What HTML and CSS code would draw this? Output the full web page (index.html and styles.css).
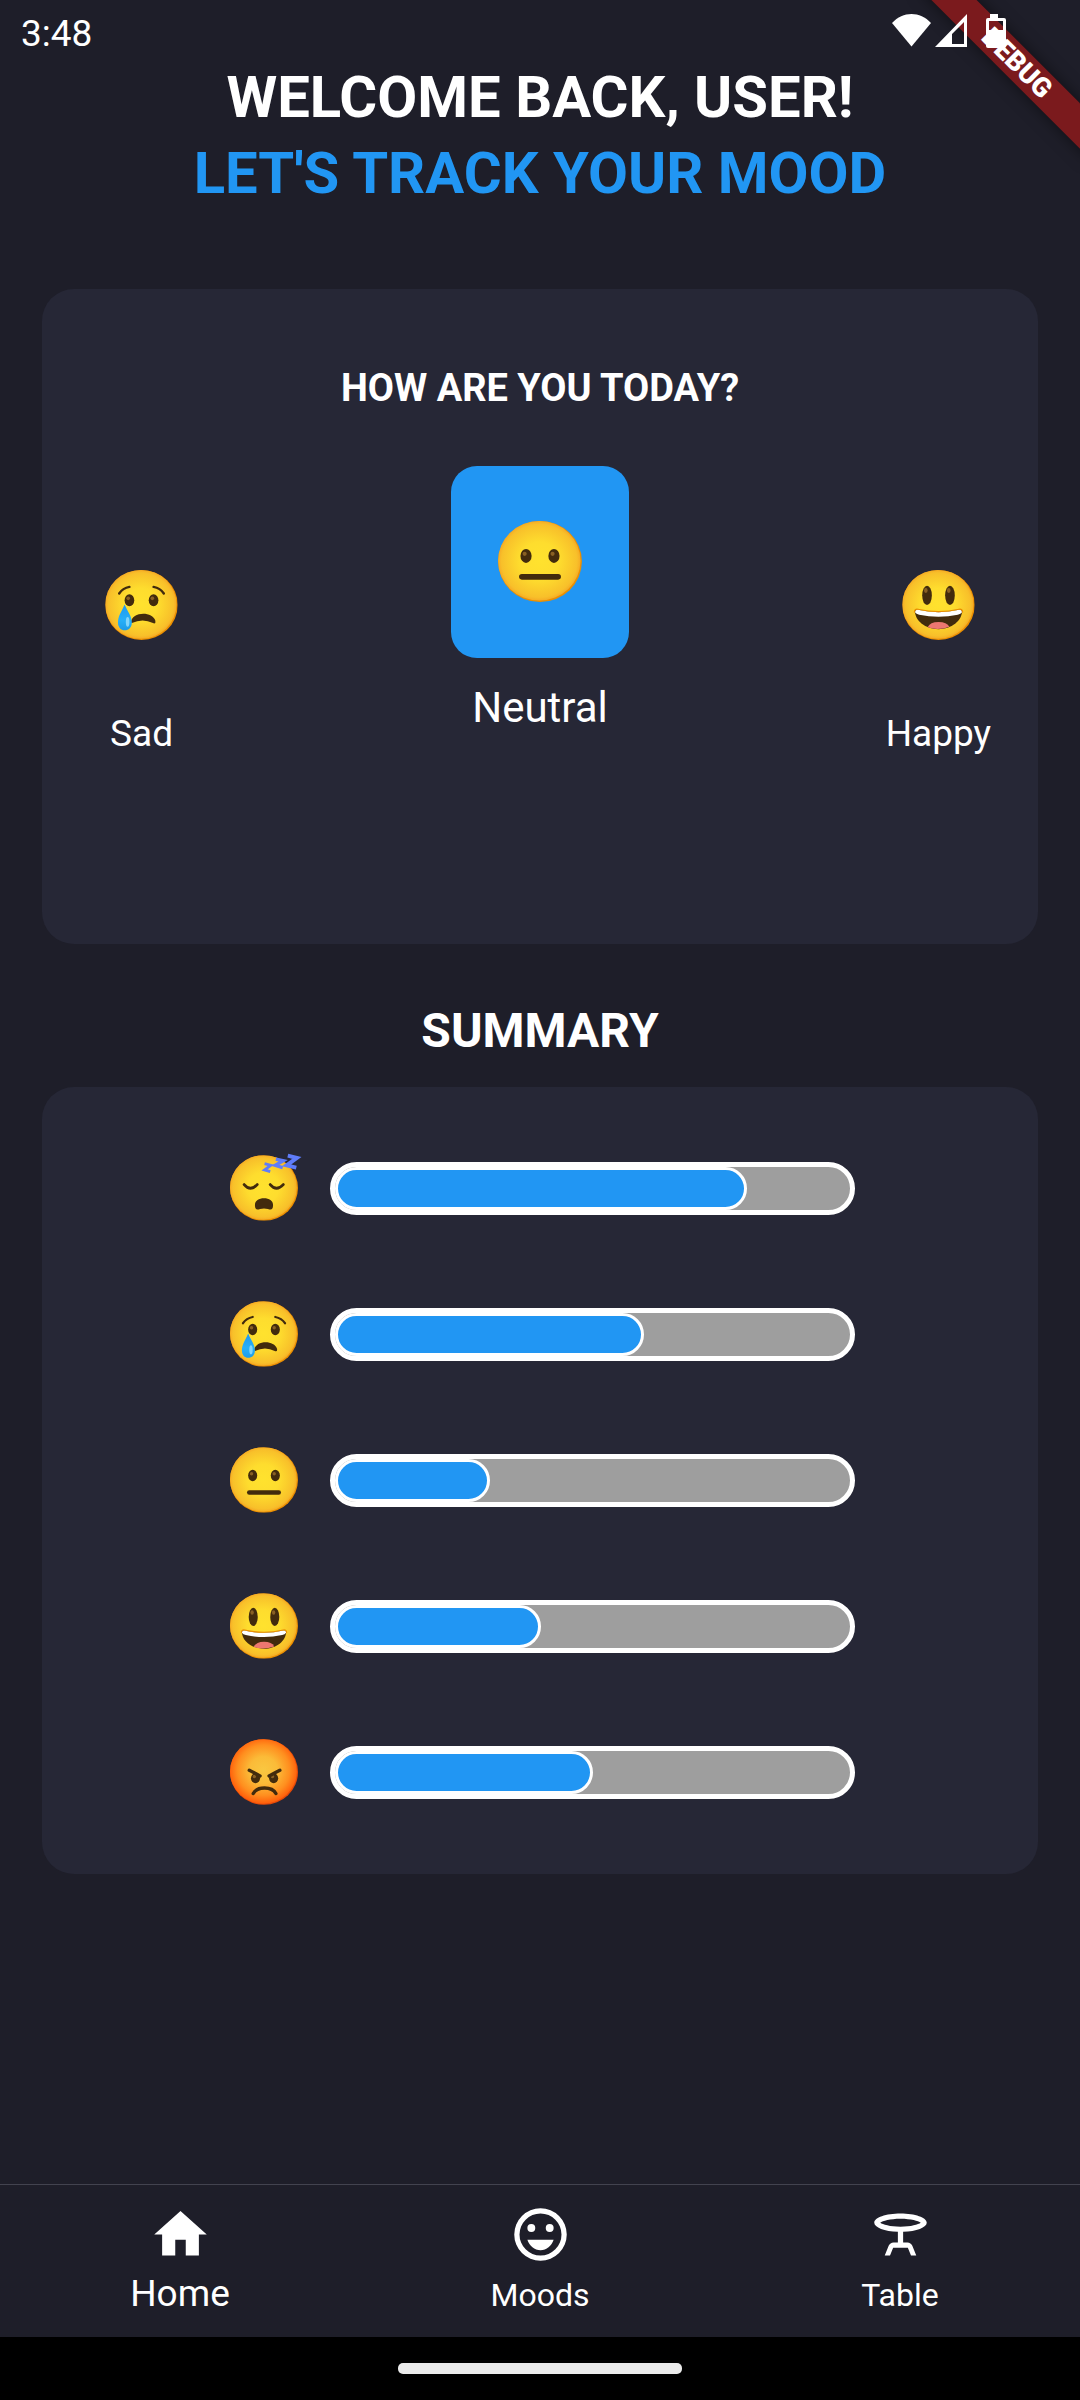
FILE: index.html
```html
<!DOCTYPE html>
<html lang="en">
<head>
<meta charset="utf-8">
<meta name="viewport" content="width=device-width, initial-scale=1">
<title>Mood tracker</title>
<link rel="stylesheet" href="styles.css">
</head>
<body>
<svg class="defs" aria-hidden="true">
  <defs>
    <radialGradient id="skin" cx="50%" cy="50%" r="52%">
      <stop offset="0" stop-color="#ffe22e"/>
      <stop offset="0.45" stop-color="#fedd2e"/>
      <stop offset="0.88" stop-color="#f8c02a"/>
      <stop offset="1" stop-color="#f4a223"/>
    </radialGradient>
    <radialGradient id="rage" cx="50%" cy="48%" r="52%">
      <stop offset="0" stop-color="#f9c741"/>
      <stop offset="0.4" stop-color="#fbbb38"/>
      <stop offset="0.75" stop-color="#ff8f1f"/>
      <stop offset="1" stop-color="#ff5c0a"/>
    </radialGradient>
    <linearGradient id="tear" x1="0" y1="0" x2="0" y2="1">
      <stop offset="0" stop-color="#1e96f0"/>
      <stop offset="0.6" stop-color="#27b0f8"/>
      <stop offset="1" stop-color="#1e9be8"/>
    </linearGradient>
    <symbol id="face" viewBox="4 4 120 116">
      <ellipse cx="64" cy="62" rx="60" ry="58" fill="#eb8f00"/>
      <ellipse cx="63" cy="61" rx="59" ry="57" fill="url(#skin)"/>
    </symbol>
    <symbol id="eyes" viewBox="4 4 120 116">
      <g fill="#422b0d"><ellipse cx="44" cy="54" rx="8" ry="10"/><ellipse cx="84" cy="54" rx="8" ry="10"/></g>
      <g fill="#896024"><ellipse cx="42" cy="51" rx="3" ry="3"/><ellipse cx="82" cy="51" rx="3" ry="3"/></g>
    </symbol>
    <symbol id="neutral" viewBox="4 4 120 116">
      <use href="#face" x="4" y="4" width="120" height="116"/>
      <use href="#eyes" x="4" y="4" width="120" height="116"/>
      <path d="M38 84H90" stroke="#422b0d" stroke-width="8" stroke-linecap="round"/>
    </symbol>
    <symbol id="sad" viewBox="4 4 120 116">
      <use href="#face" x="4" y="4" width="120" height="116"/>
      <use href="#eyes" x="4" y="4" width="120" height="116"/>
      <path d="M27 43Q33 34 44 32M84 32Q95 34 101 43" fill="none" stroke="#422b0d" stroke-width="4" stroke-linecap="round"/>
      <path d="M46 92C48 72 82 72 87 88Q88 94 83 92Q66 83 48 92Z" fill="#422b0d"/>
      <path d="M36 61C31 73 25 80 25 91C25 99 30 104 36 104C43 104 48 99 48 91C48 80 41 73 36 61Z" fill="url(#tear)"/>
      <ellipse cx="41" cy="90" rx="3" ry="8" fill="#81d4fa"/>
    </symbol>
    <symbol id="happy" viewBox="4 4 120 116">
      <use href="#face" x="4" y="4" width="120" height="116"/>
      <g fill="#422b0d"><ellipse cx="45" cy="46" rx="8" ry="16"/><ellipse cx="83" cy="46" rx="8" ry="16"/></g>
      <g fill="#896024"><ellipse cx="43" cy="38" rx="3" ry="4"/><ellipse cx="81" cy="38" rx="3" ry="4"/></g>
      <path d="M25 72C25 88 42 102 64 102C86 102 103 88 103 72Q102 69 98 70Q64 78 30 70Q25 69 25 72Z" fill="#422b0d"/>
      <path d="M46 99Q50 90 64 90Q78 90 82 98Q64 105 46 99Z" fill="#ed7770"/>
      <path d="M25 74Q25 69 30 70Q64 78 98 70Q103 69 103 74Q101 77 96 78Q64 85 32 78Q27 77 25 74Z" fill="#fff"/>
      <path d="M24 74Q24 68 30 69Q64 77 98 69Q104 68 104 74" fill="none" stroke="#eb8f00" stroke-width="2" stroke-linecap="round"/>
    </symbol>
    <symbol id="sleepy" viewBox="4 4 120 116" overflow="visible">
      <use href="#face" x="4" y="4" width="120" height="116"/>
      <path d="M29 56Q40 69 52 56M75 56Q86 69 98 56" fill="none" stroke="#422b0d" stroke-width="5" stroke-linecap="round"/>
      <path d="M48 92C48 84 55 80 64 80C73 80 80 84 80 92C80 101 76 101 71 99Q64 97 57 99C52 101 48 101 48 92Z" fill="#422b0d"/>
      <g fill="none" stroke="#5f7cf9">
        <path d="M65 19L76 22L65 30L75 33" stroke-width="5"/>
        <path d="M85 11L98 14L84 22L97 26" stroke-width="6"/>
        <path d="M106 5L122 9L104 22L121 26" stroke-width="7"/>
      </g>
    </symbol>
    <symbol id="angry" viewBox="4 4 120 116">
      <ellipse cx="64" cy="62" rx="60" ry="58" fill="#e64a08"/>
      <ellipse cx="63" cy="61" rx="59" ry="57" fill="url(#rage)"/>
      <g fill="#422b0d"><ellipse cx="49" cy="73" rx="8" ry="9"/><ellipse cx="81" cy="73" rx="8" ry="9"/></g>
      <g fill="#896024"><circle cx="47" cy="70" r="3"/><circle cx="79" cy="70" r="3"/></g>
      <path d="M38 59Q46 63 57 69M92 59Q84 63 73 69" fill="none" stroke="#422b0d" stroke-width="6" stroke-linecap="round"/>
      <path d="M45 100C52 87 78 87 85 100" fill="none" stroke="#422b0d" stroke-width="6" stroke-linecap="round"/>
    </symbol>
  </defs>
</svg>

<header class="status">
  <span class="status-time">3:48</span>
  <svg class="status-icons" viewBox="0 0 114 34" aria-hidden="true">
    <path d="M0 9C11 -3 28 -3 39 9L19.500 32.500Z" fill="#fff"/>
    <path fill-rule="evenodd" d="M43 33L75 0V33ZM60 20V30H72V8Z" fill="#fff"/>
    <path fill-rule="evenodd" d="M98 0H106V4H112Q114 4 114 6V32Q114 34 112 34H96Q94 34 94 32V6Q94 4 96 4H98ZM97 7V16H111V7Z" fill="#fff"/>
  </svg>
</header>
<div class="debug"><span class="debug-band">DEBUG</span></div>

<main class="page">
  <h1 class="welcome">WELCOME BACK, USER!<span class="tagline">LET'S TRACK YOUR MOOD</span></h1>

  <section class="card today">
    <h2 class="question">HOW ARE YOU TODAY?</h2>
    <div class="moods">
      <button class="mood" type="button">
        <span class="tile"><svg class="emoji" aria-hidden="true"><use href="#sad"/></svg></span>
        <span class="mood-name">Sad</span>
      </button>
      <button class="mood selected" type="button" aria-pressed="true">
        <span class="tile"><svg class="emoji" aria-hidden="true"><use href="#neutral"/></svg></span>
        <span class="mood-name">Neutral</span>
      </button>
      <button class="mood" type="button">
        <span class="tile"><svg class="emoji" aria-hidden="true"><use href="#happy"/></svg></span>
        <span class="mood-name">Happy</span>
      </button>
    </div>
  </section>

  <h2 class="summary-title">SUMMARY</h2>
  <section class="card summary">
    <div class="stat">
      <span class="stat-icon"><svg class="face" aria-hidden="true"><use href="#sleepy"/></svg></span>
      <div class="bar" role="progressbar" aria-label="Sleepy" aria-valuenow="80"><div class="fill" style="width:80%"></div></div>
    </div>
    <div class="stat">
      <span class="stat-icon"><svg class="face" aria-hidden="true"><use href="#sad"/></svg></span>
      <div class="bar" role="progressbar" aria-label="Sad" aria-valuenow="60"><div class="fill" style="width:60%"></div></div>
    </div>
    <div class="stat">
      <span class="stat-icon"><svg class="face" aria-hidden="true"><use href="#neutral"/></svg></span>
      <div class="bar" role="progressbar" aria-label="Neutral" aria-valuenow="30"><div class="fill" style="width:30%"></div></div>
    </div>
    <div class="stat">
      <span class="stat-icon"><svg class="face" aria-hidden="true"><use href="#happy"/></svg></span>
      <div class="bar" role="progressbar" aria-label="Happy" aria-valuenow="40"><div class="fill" style="width:40%"></div></div>
    </div>
    <div class="stat">
      <span class="stat-icon"><svg class="face" aria-hidden="true"><use href="#angry"/></svg></span>
      <div class="bar" role="progressbar" aria-label="Angry" aria-valuenow="50"><div class="fill" style="width:50%"></div></div>
    </div>
  </section>
</main>

<nav class="tabs">
  <a class="tab current" href="#home" aria-current="page">
    <svg class="tab-icon" viewBox="0 0 24 24" aria-hidden="true"><path d="M10 20v-6h4v6h5v-8h3L12 3 2 12h3v8z"/></svg>
    <span>Home</span>
  </a>
  <a class="tab" href="#moods">
    <svg class="tab-icon" viewBox="0 0 24 24" aria-hidden="true"><path fill-rule="evenodd" d="M12 2a10 10 0 1 0 0 20a10 10 0 1 0 0-20zM12 4a8 8 0 1 1 0 16a8 8 0 1 1 0-16z"/><circle cx="8.500" cy="9.500" r="1.500"/><circle cx="15.500" cy="9.500" r="1.500"/><path d="M12 18c2.280 0 4.220-1.660 5-4H7c.780 2.340 2.720 4 5 4z"/></svg>
    <span>Moods</span>
  </a>
  <a class="tab" href="#table">
    <svg class="tab-icon" viewBox="0 0 24 24" aria-hidden="true"><path fill-rule="evenodd" d="M22 7.500C22 5.570 17.520 4 12 4S2 5.570 2 7.500c0 1.810 3.950 3.310 9 3.480V15H9.350c-.820 0-1.550.500-1.860 1.260L6 20h2l1.200-3h5.600l1.200 3h2l-1.500-3.740C16.210 15.500 15.470 15 14.650 15H13v-4.020c5.050-.170 9-1.670 9-3.480zM12 6c4.050 0 6.740.860 7.720 1.500C18.740 8.140 16.050 9 12 9S5.260 8.140 4.280 7.500C5.260 6.860 7.950 6 12 6z"/></svg>
    <span>Table</span>
  </a>
</nav>
<div class="gesture"><div class="pill"></div></div>
</body>
</html>
```
FILE: styles.css
```css
* { box-sizing: border-box; }

body {
  margin: 0;
  min-height: 100vh;
  display: flex;
  flex-direction: column;
  position: relative;
  background: #1e1e29;
  color: #fff;
  font-family: Roboto, sans-serif;
}

h1, h2 { margin: 0; font-weight: 700; text-align: center; }
button { border: 0; padding: 0; background: none; color: inherit; font: inherit; }
.defs { position: absolute; width: 0; height: 0; }

/* System status bar, drawn over the debug ribbon */
.status {
  position: relative;
  z-index: 2;
  display: flex;
  justify-content: space-between;
  align-items: flex-start;
  height: 59px;
  padding: 0 74px 0 21px;
}
.status-time { font-size: 37px; line-height: 67px; }
.status-icons { width: 114px; height: 34px; margin-top: 14px; }

.debug {
  position: absolute;
  top: 0;
  right: 0;
  width: 200px;
  height: 200px;
  overflow: hidden;
}
.debug-band {
  position: absolute;
  top: 47px;
  left: 17px;
  width: 240px;
  height: 32px;
  transform: rotate(45deg);
  background: #7b1a1d;
  box-shadow: 0 0 16px rgba(0, 0, 0, 0.5);
  font-size: 27px;
  font-weight: 900;
  line-height: 32px;
  text-align: center;
}

.page { flex: 1; padding: 0 42px; }
.welcome { font-size: 58px; line-height: 76px; }
.tagline { display: block; color: #2196f3; }

.card { border-radius: 32px; background: #262736; }

.today { min-height: 655px; margin-top: 78px; padding-top: 75px; }
.question { font-size: 38px; line-height: 48px; }

.moods {
  display: grid;
  grid-template-columns: 1fr 3fr 1fr;
  align-items: start;
  margin-top: 54px;
}
.mood {
  display: flex;
  flex-direction: column;
  align-items: center;
  padding-top: 56px;
  gap: 24px;
  font-size: 37px;
  line-height: 46px;
}
.tile {
  display: flex;
  align-items: center;
  justify-content: center;
  height: 165px;
}
.emoji { width: 73px; height: 70px; }
.selected { padding-top: 0; font-size: 42px; line-height: 52px; }
.selected .tile {
  width: 178px;
  height: 192px;
  padding-bottom: 2px;
  border-radius: 26px;
  background: #2196f3;
}
.selected .emoji { width: 84px; height: 81px; }

.summary-title { margin: 59px 0 28px; font-size: 48px; line-height: 56px; }
.summary {
  display: flex;
  flex-direction: column;
  gap: 78px;
  padding: 67px 0 68px;
}
.stat {
  display: flex;
  align-items: center;
  justify-content: center;
  gap: 27px;
  height: 68px;
}
.stat-icon { display: flex; justify-content: center; width: 78px; }
.face { width: 68px; height: 66px; overflow: visible; }
.bar {
  width: 525px;
  height: 53px;
  border: 5px solid #fff;
  border-radius: 27px;
  background: #9e9e9e;
}
.fill {
  height: 100%;
  border: 3px solid #fff;
  border-radius: 22px;
  background: #2196f3;
}

.tabs {
  display: grid;
  grid-template-columns: repeat(3, 1fr);
  min-height: 153px;
  padding-top: 18px;
  border-top: 1px solid #43434f;
}
.tab {
  display: flex;
  flex-direction: column;
  align-items: center;
  gap: 4px;
  color: #fff;
  font-size: 32px;
  line-height: 50px;
  text-decoration: none;
}
.current { font-size: 37px; line-height: 48px; }
.tab-icon { width: 63px; height: 63px; fill: #fff; }

.gesture {
  display: flex;
  justify-content: center;
  height: 63px;
  padding-top: 26px;
  background: #000;
}
.pill { width: 284px; height: 11px; border-radius: 5px; background: #ebebeb; }
```
